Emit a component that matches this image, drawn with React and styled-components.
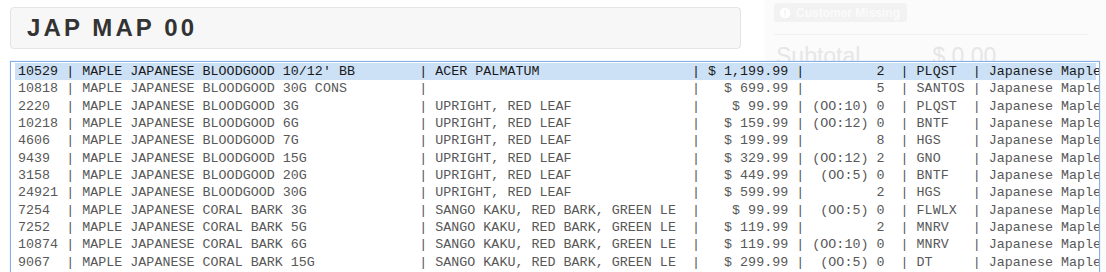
import React from "react"
import styled, { createGlobalStyle } from "styled-components"

const GlobalStyle = createGlobalStyle`
    html, body {
        margin: 0;
        background: #fff;
        font-family: "Liberation Sans", Arial, sans-serif;
    }
`

const items = [
    ["10529", "MAPLE JAPANESE BLOODGOOD 10/12' BB", "ACER PALMATUM", "$ 1,199.99", "2", "PLQST"],
    ["10818", "MAPLE JAPANESE BLOODGOOD 30G CONS", "", "$ 699.99", "5", "SANTOS"],
    ["2220", "MAPLE JAPANESE BLOODGOOD 3G", "UPRIGHT, RED LEAF", "$ 99.99", "(OO:10) 0", "PLQST"],
    ["10218", "MAPLE JAPANESE BLOODGOOD 6G", "UPRIGHT, RED LEAF", "$ 159.99", "(OO:12) 0", "BNTF"],
    ["4606", "MAPLE JAPANESE BLOODGOOD 7G", "UPRIGHT, RED LEAF", "$ 199.99", "8", "HGS"],
    ["9439", "MAPLE JAPANESE BLOODGOOD 15G", "UPRIGHT, RED LEAF", "$ 329.99", "(OO:12) 2", "GNO"],
    ["3158", "MAPLE JAPANESE BLOODGOOD 20G", "UPRIGHT, RED LEAF", "$ 449.99", "(OO:5) 0", "BNTF"],
    ["24921", "MAPLE JAPANESE BLOODGOOD 30G", "UPRIGHT, RED LEAF", "$ 599.99", "2", "HGS"],
    ["7254", "MAPLE JAPANESE CORAL BARK 3G", "SANGO KAKU, RED BARK, GREEN LE", "$ 99.99", "(OO:5) 0", "FLWLX"],
    ["7252", "MAPLE JAPANESE CORAL BARK 5G", "SANGO KAKU, RED BARK, GREEN LE", "$ 119.99", "2", "MNRV"],
    ["10874", "MAPLE JAPANESE CORAL BARK 6G", "SANGO KAKU, RED BARK, GREEN LE", "$ 119.99", "(OO:10) 0", "MNRV"],
    ["9067", "MAPLE JAPANESE CORAL BARK 15G", "SANGO KAKU, RED BARK, GREEN LE", "$ 299.99", "(OO:5) 0", "DT"],
]

// fixed-width text columns, like the old terminal lookup
const formatLine = ([id, name, desc, price, qty, vendor]) =>
    id.padEnd(5) + " | " +
    name.padEnd(41) + " | " +
    desc.padEnd(31) + " | " +
    price.padStart(10) + " | " +
    qty.padStart(9) + "  | " +
    vendor.padEnd(6) + " | " +
    "Japanese Maple"

export default class App extends React.Component {
    render() {
        return (
            <Page>
                <GlobalStyle />
                <Main>
                    <Header>
                        <Title>JAP MAP 00</Title>
                    </Header>
                </Main>
                <Sidebar>
                    <Badge>
                        <InfoIcon viewBox="0 0 16 16">
                            <circle cx="8" cy="8" r="7" fill="#fff" />
                            <rect x="7" y="3.5" width="2" height="6" rx="1" fill="#f2f2f2" />
                            <circle cx="8" cy="11.8" r="1.1" fill="#f2f2f2" />
                        </InfoIcon>
                        Customer Missing
                    </Badge>
                    <Rule />
                    <TotalRow>
                        <span>Subtotal</span>
                        <Amount>$ 0.00</Amount>
                    </TotalRow>
                </Sidebar>
                <ResultList>
                    { items.map((item, i) => (
                        <ResultRow key={ item[0] } selected={ i === 0 }>
                            { formatLine(item) }
                        </ResultRow>
                    )) }
                </ResultList>
            </Page>
        )
    }
}

const Page = styled.div`
    position: relative;
    display: flex;
    gap: 24px;
    padding-left: 10px;
    height: 272px;
    overflow: hidden;
`
const Main = styled.div`
    width: 731px;
    padding-top: 7px;
`
const Header = styled.div`
    height: 40px;
    display: flex;
    align-items: center;
    padding: 0 16px;
    background: #f7f7f7;
    border: 1px solid #e4e4e4;
    border-radius: 4px;
`
const Title = styled.h1`
    margin: 0;
    font-size: 24px;
    font-weight: 700;
    letter-spacing: 3.1px;
    color: #333;
`
const Sidebar = styled.div`
    flex: 1;
    background: #fbfbfb;
    padding: 3px 18px 0 9px;
`
const Badge = styled.div`
    display: inline-flex;
    align-items: center;
    gap: 5px;
    height: 19px;
    padding: 0 7px 0 5px;
    background: #f2f2f2;
    border-radius: 3px;
    color: #fbfbfb;
    font-size: 12px;
    font-weight: 700;
`
const InfoIcon = styled.svg`
    width: 12px;
    height: 12px;
`
const Rule = styled.div`
    margin-top: 11px;
    border-top: 1px solid #f1f1f1;
`
const TotalRow = styled.div`
    display: flex;
    padding-top: 8px;
    padding-left: 2px;
    font-size: 23px;
    color: #e6e6e6;
`
const Amount = styled.span`
    margin-left: 72px;
`
const ResultList = styled.div`
    position: absolute;
    top: 61px;
    left: 10px;
    box-sizing: border-box;
    width: 1090px;
    height: 240px;
    padding: 1px 3px 1px 4px;
    background: #fff;
    border: 1px solid #86aee9;
    box-shadow: 0 0 1px 0 #a9c6f0;
    overflow: hidden;
`
const ResultRow = styled.div`
    padding: 0 3px;
    height: 17.33px;
    line-height: 17.33px;
    white-space: pre;
    font-family: "Liberation Mono", "Courier New", monospace;
    font-size: 13.333px;
    letter-spacing: 0.025px;
    color: ${ ({ selected }) => selected ? "#1a1a1a" : "#585858" };
    background: ${ ({ selected }) => selected ? "#cce0f6" : "transparent" };
`
